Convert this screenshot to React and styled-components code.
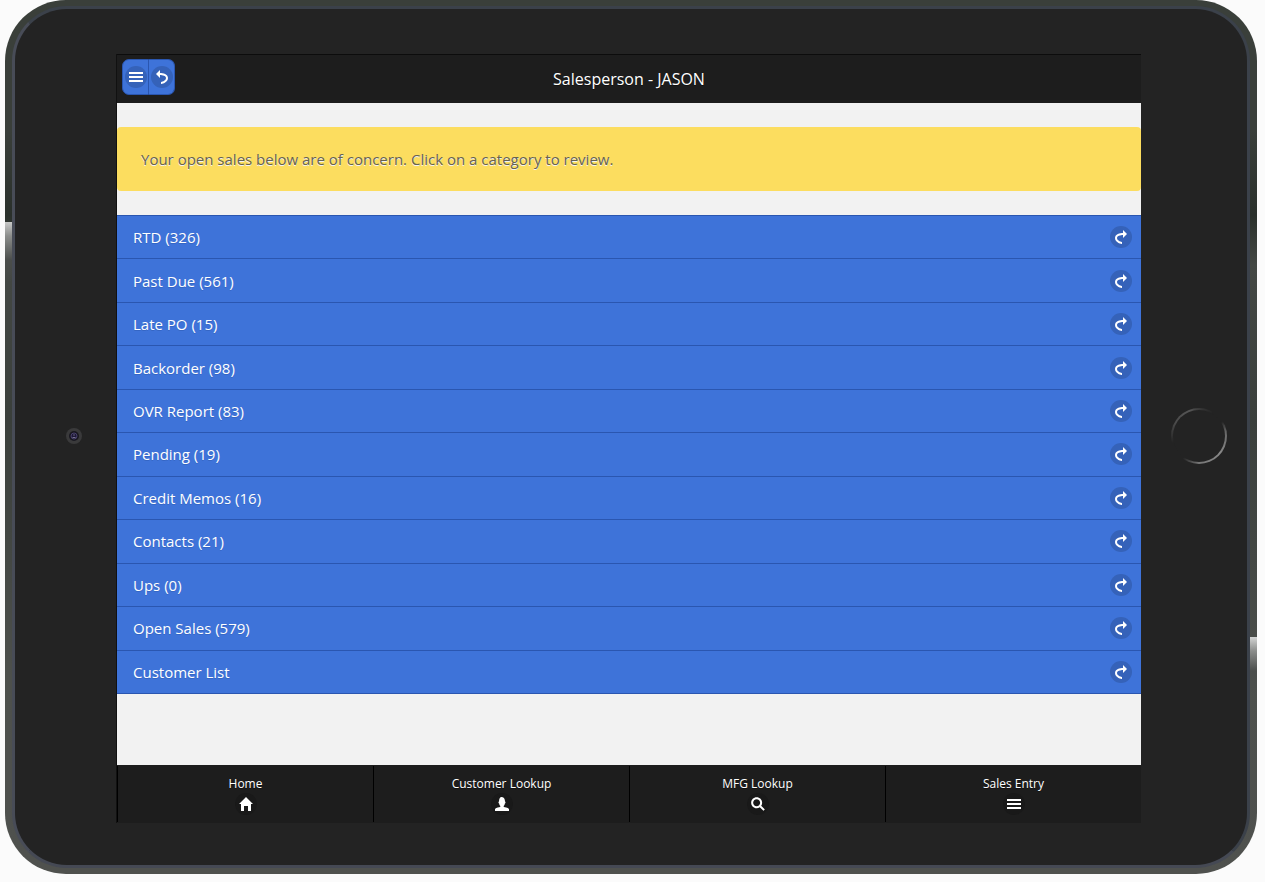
import React from "react";
import styled, { createGlobalStyle } from "styled-components";

const GlobalStyle = createGlobalStyle`
  *, *::before, *::after { box-sizing: border-box; }
  body {
    margin: 0;
    background: #fbfbfb;
    color: #fff;
    font-family: "Segoe UI", "Open Sans", "Noto Sans", sans-serif;
    font-size: 15px;
    line-height: 20px;
  }
`;

const Page = styled.div`
  padding: 0 8px 8px 5px;
`;

const Device = styled.div`
  padding: 6px 7px;
  border-radius: 61px;
  background:
    linear-gradient(#c8c9c8, #8b8d8b 14px, #4b4e4c 38px, transparent 60px) 0 222px / 7px 60px no-repeat,
    linear-gradient(#d4d5d4, #8b8d8b 14px, #4b4e4c 34px, transparent 60px) 100% 637px / 7px 60px no-repeat,
    linear-gradient(#3a3f3a, #3a3f3a 130px, #2a302b 215px, #444844 265px, #3a3f3b 420px, #4d504c 680px, #4f514e);
`;

const Bezel = styled.div`
  display: grid;
  grid-template-columns: 101px minmax(0, 1fr) 106px;
  align-items: center;
  padding: 45px 0 42px;
  border: 3px solid;
  border-color: #3b414a #3b414a #454954 #484c57;
  border-radius: 55px;
  background: #232323;
`;

const CameraArt = styled.svg`
  display: block;
  margin: 0 0 5px 51px;
`;

const HomeRing = styled.div`
  width: 56px;
  height: 56px;
  margin: 0 0 5px 30px;
  padding: 2px;
  border-radius: 50%;
  background: conic-gradient(#3a3a3a, #232323 30deg, #232323 58deg, #666 80deg, #888 130deg, #777 180deg, #232323 216deg, #232323 255deg, #4c4c4c 300deg, #555 340deg, #3a3a3a);

  &::before {
    content: "";
    display: block;
    height: 100%;
    border-radius: 50%;
    background: #232323;
  }
`;

const Screen = styled.div`
  display: flex;
  flex-direction: column;
  min-height: 769px;
  border-left: 1px solid #111;
  background: #f2f2f2;
`;

const Header = styled.header`
  display: grid;
  grid-template-columns: 1fr auto 1fr;
  align-items: start;
  min-height: 49px;
  padding: 4px 5px;
  border-top: 1px solid #0c0c0c;
  background: #1d1d1d;
`;

const Title = styled.h1`
  margin: 0;
  padding-top: 10px;
  font-size: 16px;
  font-weight: 400;
  text-shadow: 0 1px 0 #111;
`;

const ButtonGroup = styled.div`
  display: flex;
`;

const ToolButton = styled.button`
  display: flex;
  align-items: center;
  height: 36px;
  padding: 0 1px 0 2px;
  border: 1px solid #2a56b0;
  border-left-width: ${(p) => (p.$side === "left" ? 1 : 0)}px;
  border-radius: ${(p) => (p.$side === "left" ? "7px 0 0 7px" : "0 7px 7px 0")};
  background: #3e73d9;
  color: #fff;
  cursor: pointer;
`;

const Disc = styled.span`
  display: flex;
  flex: none;
  align-items: center;
  justify-content: center;
  width: 22px;
  height: 22px;
  border-radius: 50%;
  background: ${(p) => (p.$dark ? "#191919" : "#3562b9")};
`;

const Main = styled.main`
  flex: 1;
  padding: 24px 0;
`;

const Notice = styled.p`
  margin: 0 0 24px;
  padding: 22px 24px;
  border-radius: 4px;
  background: #fcdd5f;
  color: #67624f;
  text-shadow: 0 1px 0 #f3f3f3;
`;

const Categories = styled.ul`
  display: grid;
  grid-auto-rows: 1fr;
  min-height: 479px;
  margin: 0;
  padding: 0;
  border-top: 1px solid #2a56b0;
  list-style: none;
`;

const Category = styled.li`
  display: grid;
  border-bottom: 1px solid #2a56b0;
`;

const CategoryLink = styled.a`
  display: flex;
  align-items: center;
  justify-content: space-between;
  padding: 0 9px 0 16px;
  background: #3e73d9;
  color: #fff;
  text-decoration: none;
  text-shadow: 0 1px 0 #3566c4;
`;

const Footer = styled.nav`
  display: grid;
  grid-template-columns: repeat(4, 1fr);
  padding: 1px 0;
  background: #1d1d1d;
`;

const FooterLink = styled.a`
  display: flex;
  flex-direction: column;
  align-items: center;
  min-height: 56px;
  padding-top: 9px;
  border-left: 1px solid #000;
  color: #fff;
  font-size: 12px;
  line-height: 18px;
  text-decoration: none;
  text-shadow: 0 1px 0 #111;
`;

const paths = {
  bars: "M0 2h14v2H0zM0 6h14v2H0zM0 10h14v2H0z",
  back: "M5,3V0L1,4l4,4V5c0,0,6,0,6,3s-5,4-5,4v2c0,0,7-1,7-6C13,4,8,3,5,3z",
  forward: "M13,4L9,0v3C6,3,1,4,1,8c0,5,7,6,7,6v-2c0,0-5-1-5-4s6-3,6-3v3L13,4z",
  home: "M7,0L0,7h2v7h3V9h4v5h3V7h2z",
  user: "M8.851,10.101c-0.18-0.399-0.2-0.763-0.153-1.104C9.383,8.49,9.738,7.621,9.891,6.465C10.493,6.355,10.5,5.967,10.5,5.5c0-0.437,0.008-0.804-0.502-0.94C9.999,4.539,10,4.521,10,4.5c0-2.103-1-4-2-4C8,0.5,7.5,0,6.5,0C5,0,4,1.877,4,4.5c0,0.021,0.001,0.039,0.002,0.06C3.492,4.696,3.5,5.063,3.5,5.5c0,0.467,0.007,0.855,0.609,0.965C4.262,7.621,4.617,8.49,5.303,8.997c0.047,0.341,0.026,0.704-0.153,1.104C1.503,10.503,0,12,0,12v2h14v-2C14,12,12.497,10.503,8.851,10.101z",
  search: "M10.171,8.766c0.617-0.888,0.979-1.964,0.979-3.126c0-3.037-2.463-5.5-5.5-5.5s-5.5,2.463-5.5,5.5s2.463,5.5,5.5,5.5c1.152,0,2.223-0.355,3.104-0.962l3.684,3.683l1.414-1.414L10.171,8.766z M5.649,9.14c-1.933,0-3.5-1.567-3.5-3.5c0-1.933,1.567-3.5,3.5-3.5c1.933,0,3.5,1.567,3.5,3.5C9.149,7.572,7.582,9.14,5.649,9.14z",
};

function Icon({ name, dark }) {
  return (
    <Disc $dark={dark}>
      <svg width="14" height="14" viewBox="0 0 14 14" fill="#fff" aria-hidden="true">
        <path d={paths[name]} />
      </svg>
    </Disc>
  );
}

function Camera() {
  return (
    <CameraArt width="16" height="16" viewBox="0 0 16 16" aria-hidden="true">
      <circle cx="8" cy="8" r="8" fill="#3a3a3b" />
      <circle cx="8" cy="8" r="5" fill="#191820" />
      <circle cx="8" cy="8" r="3" fill="#1d1838" stroke="#47406a" />
      <path d="M6.500 9.500h3" stroke="#77718f" />
      <circle cx="8" cy="7" r="1" fill="#4b4660" />
    </CameraArt>
  );
}

const categories = [
  "RTD (326)",
  "Past Due (561)",
  "Late PO (15)",
  "Backorder (98)",
  "OVR Report (83)",
  "Pending (19)",
  "Credit Memos (16)",
  "Contacts (21)",
  "Ups (0)",
  "Open Sales (579)",
  "Customer List",
];

const footerItems = [
  ["Home", "home"],
  ["Customer Lookup", "user"],
  ["MFG Lookup", "search"],
  ["Sales Entry", "bars"],
];

export default function App() {
  return (
    <Page>
      <GlobalStyle />
      <Device>
        <Bezel>
          <Camera />
          <Screen>
            <Header>
              <ButtonGroup>
                <ToolButton $side="left" aria-label="Menu">
                  <Icon name="bars" />
                </ToolButton>
                <ToolButton $side="right" aria-label="Back">
                  <Icon name="back" />
                </ToolButton>
              </ButtonGroup>
              <Title>Salesperson - JASON</Title>
            </Header>
            <Main>
              <Notice>Your open sales below are of concern. Click on a category to review.</Notice>
              <Categories>
                {categories.map((label) => (
                  <Category key={label}>
                    <CategoryLink href="#">
                      {label}
                      <Icon name="forward" />
                    </CategoryLink>
                  </Category>
                ))}
              </Categories>
            </Main>
            <Footer>
              {footerItems.map(([label, icon]) => (
                <FooterLink key={label} href="#">
                  {label}
                  <Icon name={icon} dark />
                </FooterLink>
              ))}
            </Footer>
          </Screen>
          <HomeRing />
        </Bezel>
      </Device>
    </Page>
  );
}
